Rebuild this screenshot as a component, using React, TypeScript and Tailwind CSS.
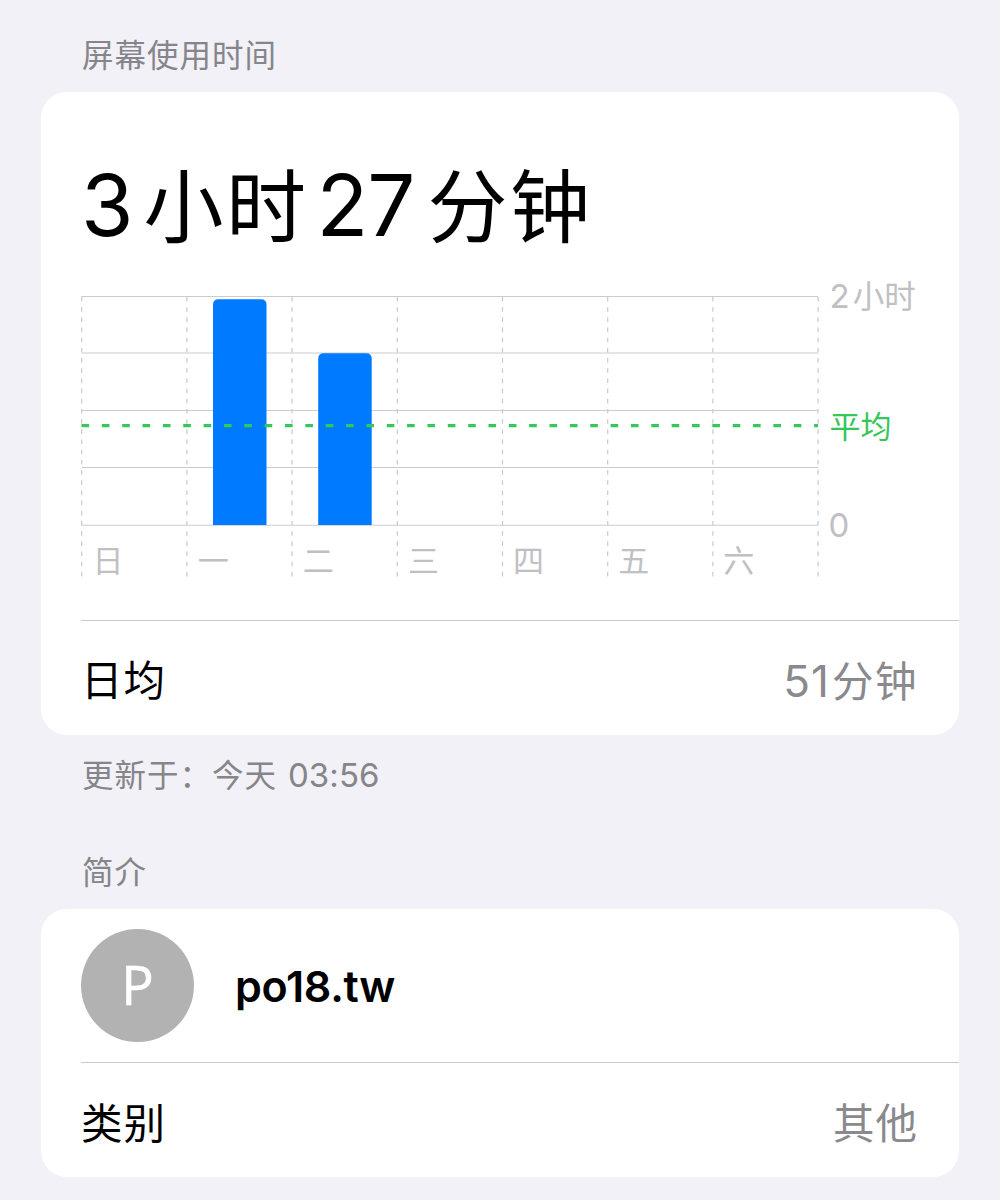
import React from 'react';
import clsx from 'clsx';

const days = ['日', '一', '二', '三', '四', '五', '六'];

// screen time per day in chart pixels, the full scale (2 hours) is 229
const usage = [0, 225.7, 171.7, 0, 0, 0, 0];

const COLUMN = 105.2;
const CHART_WIDTH = 737;
const BASELINE = 229;

interface BarProps {
  x: number;
  height: number;
}

const Bar: React.FC<BarProps> = ({ x, height }) => {
  const width = 53.5;
  const r = 5.5;
  const top = BASELINE - height;
  return (
    <path
      fill="#007aff"
      d={`M${x} ${BASELINE}V${top + r}q0 ${-r} ${r} ${-r}h${width - 2 * r}q${r} 0 ${r} ${r}V${BASELINE}z`}
    />
  );
};

const UsageChart = () => (
  <div className="flex h-[281px]">
    <div className="grid w-[738px] shrink-0">
      <svg
        className="col-start-1 row-start-1"
        width={738}
        height={281}
        viewBox="0 0 738 281"
        fill="none"
      >
        {[0.5, 57, 114.5, 171.5, 229.2].map((y) => (
          <path key={y} d={`M0.5 ${y}H${CHART_WIDTH}`} stroke="#cbcbd2" strokeWidth="1.1" />
        ))}
        {Array.from({ length: 8 }, (_, i) => (
          <path
            key={i}
            d={`M${0.7 + i * COLUMN} 1V281`}
            stroke="#c9c9cd"
            strokeWidth="1.2"
            strokeDasharray="4.6 5.58"
          />
        ))}
        {usage.map((height, i) => height > 0 && <Bar key={days[i]} x={26.8 + i * COLUMN} height={height} />)}
        <path d={`M0.5 129.6H${CHART_WIDTH}`} stroke="#34c759" strokeWidth="3.4" strokeDasharray="7.6 12.75" />
      </svg>
      <div className="col-start-1 row-start-1 grid w-[736px] grid-cols-7 self-end pb-px text-[31px] leading-[30px] text-[#c0c0c3]">
        {days.map((day) => (
          <span key={day} className="pl-[11.5px]">{day}</span>
        ))}
      </div>
    </div>
    <div className="-mt-[19px] flex flex-col pl-[10.5px] text-[31px] leading-[38px] text-[#c0c0c3]">
      <span className="flex items-baseline gap-[3px] whitespace-nowrap text-[33px]">
        2<span className="text-[31.5px]">小时</span>
      </span>
      <span className="mt-[92px] text-[#34c759]">平均</span>
      <span className="mt-[60px] -ml-px text-[33px]">0</span>
    </div>
  </div>
);

interface RowProps {
  label: string;
  className?: string;
  children: React.ReactNode;
}

const Row: React.FC<RowProps> = ({ label, className, children }) => (
  <div
    className={clsx(
      'ml-[40px] flex items-center justify-between border-t border-[#c8c8cb] pr-[41px] text-[41.5px] leading-[60px] tracking-[1px]',
      className
    )}
  >
    <span className="text-black">{label}</span>
    <span className="flex items-baseline text-[#8a8a8e]">{children}</span>
  </div>
);

const Caption: React.FC<{ className?: string; children: React.ReactNode }> = ({ className, children }) => (
  <div className={clsx('pl-[82px] text-[31.5px] leading-[40px] tracking-[1px] text-[#85858a]', className)}>
    {children}
  </div>
);

export default function App() {
  return (
    <div className="flex h-[1200px] w-[1000px] flex-col overflow-hidden bg-[#f2f1f7] font-['Inter','Noto_Sans_CJK_SC',sans-serif] text-black">
      <Caption className="mt-[36px]">屏幕使用时间</Caption>

      <section className="mx-[41px] mt-[16px] h-[643px] rounded-[26px] bg-white">
        <h1 className="flex h-[204px] items-baseline pl-[40px] pt-[63px] text-[85px] leading-[100px]">
          <span className="font-[380]">3</span>
          <span className="ml-[10px] pt-[2px] text-[80px] tracking-[2.5px]">小时</span>
          <span className="ml-[8px] font-[380] tracking-[-1px]">27</span>
          <span className="ml-[13px] text-[80px] tracking-[2.5px]">分钟</span>
        </h1>
        <div className="pl-[40px]">
          <UsageChart />
        </div>
        <Row label="日均" className="mt-[43px] h-[115px] pt-[6px]">
          <span className="mr-[2px] text-[44px]">51</span>
          <span className="tracking-[1.5px]">分钟</span>
        </Row>
      </section>

      <Caption className="mt-[20px]">
        更新于：今天 <span className="ml-px text-[33px] tracking-[0.1px]">03:56</span>
      </Caption>

      <Caption className="mt-[57px]">简介</Caption>
      <section className="mx-[41px] mt-[16px] h-[268px] rounded-[26px] bg-white">
        <div className="flex h-[153px] items-center pl-[40px]">
          <div className="flex size-[113px] items-center justify-center rounded-full bg-[#b2b2b2] pb-[4px] font-['Open_Sans',sans-serif] text-[54px] leading-none text-white [-webkit-text-stroke:0.6px_white]">
            P
          </div>
          <span className="ml-[41px] pt-[2px] text-[43px] font-semibold tracking-[-0.3px]">po18.tw</span>
        </div>
        <Row label="类别" className="h-[115px] pt-[7px]">
          其他
        </Row>
      </section>
    </div>
  );
}
